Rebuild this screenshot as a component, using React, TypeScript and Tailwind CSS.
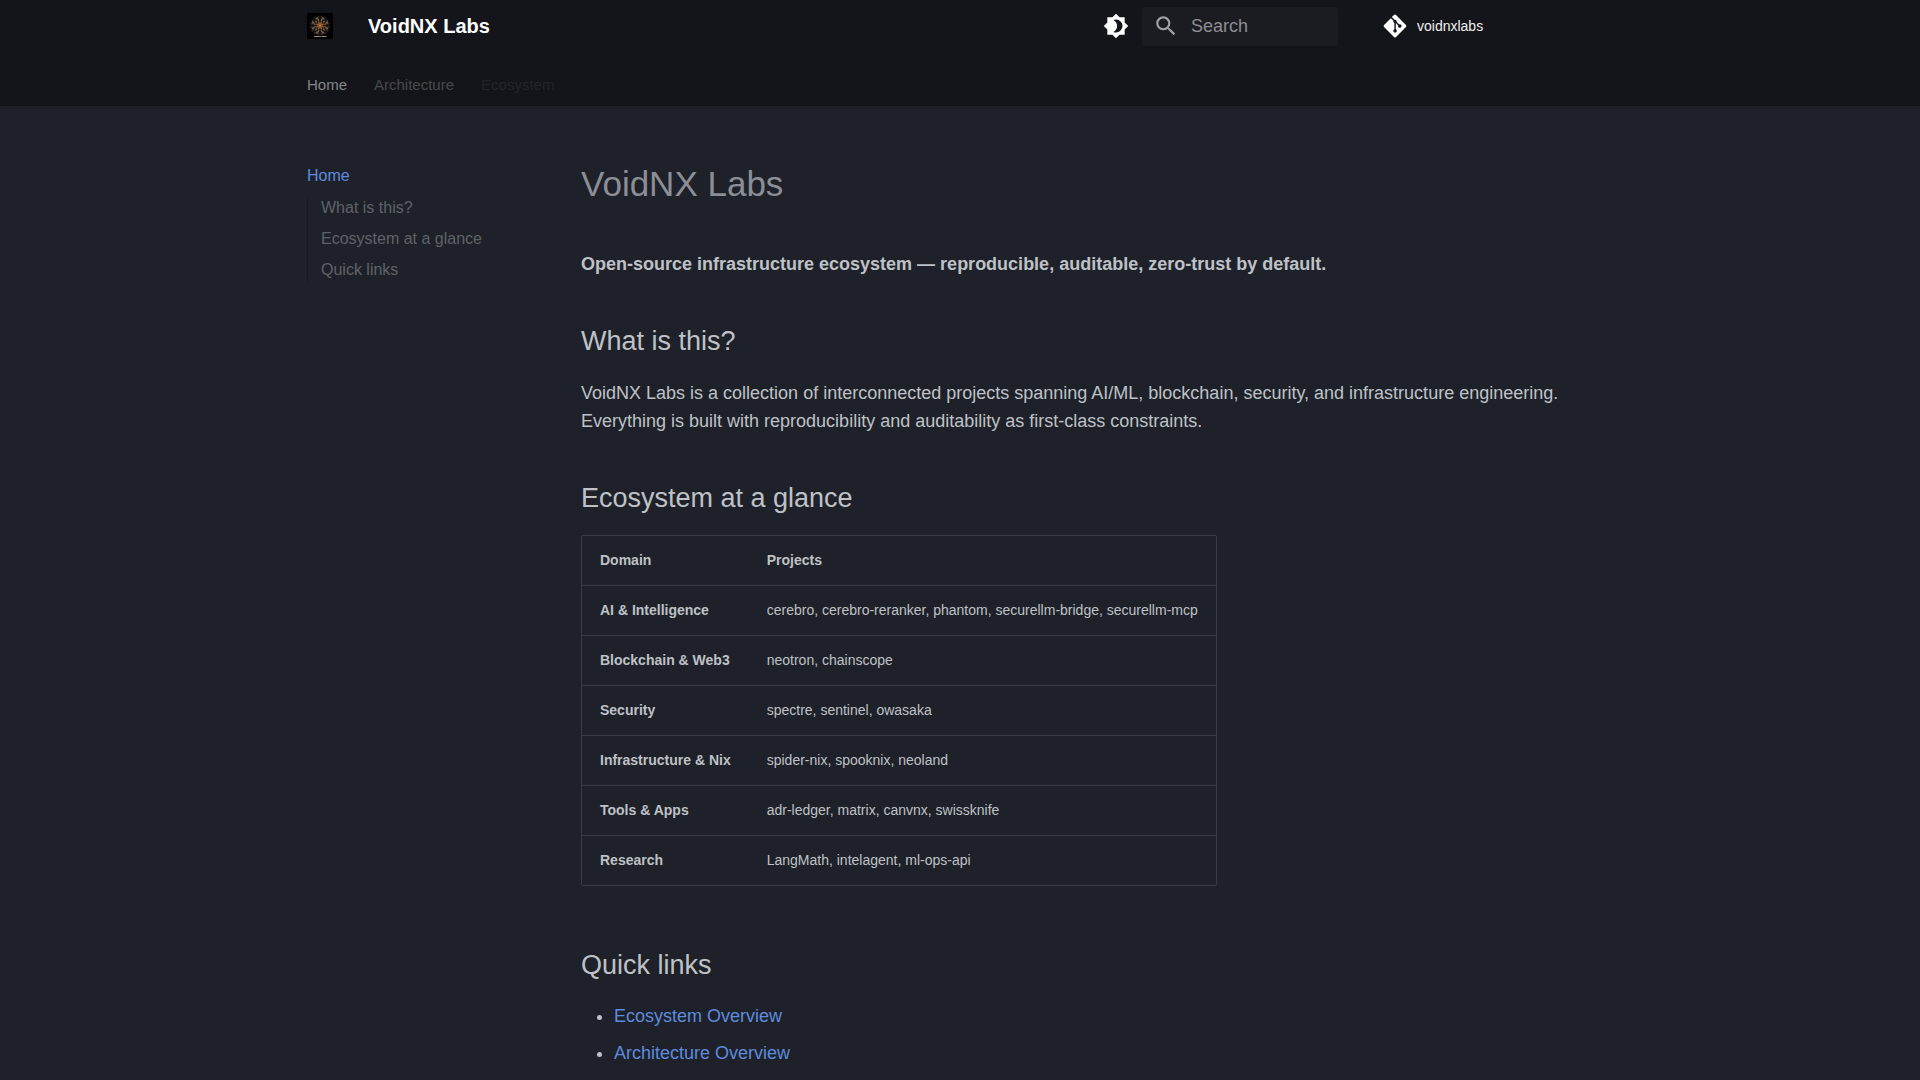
import React from "react";
import { FaGitAlt } from "react-icons/fa";

const tabs = [
  { label: "Home", className: "text-[#858689]" },
  { label: "Architecture", className: "text-[#48494d]" },
  { label: "Ecosystem", className: "text-[#232429]" },
];

const toc = [
  { label: "What is this?", href: "#what-is-this" },
  { label: "Ecosystem at a glance", href: "#ecosystem-at-a-glance" },
  { label: "Quick links", href: "#quick-links" },
];

const domains = [
  {
    domain: "AI & Intelligence",
    projects: "cerebro, cerebro-reranker, phantom, securellm-bridge, securellm-mcp",
  },
  { domain: "Blockchain & Web3", projects: "neotron, chainscope" },
  { domain: "Security", projects: "spectre, sentinel, owasaka" },
  { domain: "Infrastructure & Nix", projects: "spider-nix, spooknix, neoland" },
  { domain: "Tools & Apps", projects: "adr-ledger, matrix, canvnx, swissknife" },
  { domain: "Research", projects: "LangMath, intelagent, ml-ops-api" },
];

const quickLinks = ["Ecosystem Overview", "Architecture Overview"];

// Mandala rings: petal count, distance from the centre, petal size, colour
const rings = [
  { count: 16, radius: 18, rx: 1, ry: 3, fill: "#3a302a" },
  { count: 8, radius: 15, rx: 2.5, ry: 2.5, fill: "#66625f" },
  { count: 12, radius: 11, rx: 1.5, ry: 2.5, fill: "#75604e" },
  { count: 8, radius: 5, rx: 1.5, ry: 3.5, fill: "#a5652f" },
];

function Logo() {
  return (
    <svg viewBox="0 0 52 52" className="w-[26px] h-[26px]" aria-hidden="true">
      <rect width="52" height="52" fill="#000" />
      <circle cx="26" cy="25" r="20" fill="#2a1c12" opacity="0.6" />
      {rings.map((ring) =>
        Array.from({ length: ring.count }, (_, i) => (
          <ellipse
            key={`${ring.radius}-${i}`}
            cx="26"
            cy={25 - ring.radius}
            rx={ring.rx}
            ry={ring.ry}
            fill={ring.fill}
            transform={`rotate(${(360 / ring.count) * (i + 0.5)} 26 25)`}
          />
        ))
      )}
      <circle cx="26" cy="25" r="2" fill="#d0905a" />
      <path d="M14 47h10M29 47h10" stroke="#8d8d8d" strokeWidth="2" />
      <path d="M24 47h4" stroke="#c46a22" strokeWidth="2" />
    </svg>
  );
}

function BrightnessIcon() {
  return (
    <svg viewBox="0 0 24 24" className="w-[26px] h-[26px]" fill="currentColor" aria-hidden="true">
      <path d="M12 18c-.89 0-1.74-.2-2.5-.55C11.56 16.5 13 14.42 13 12s-1.44-4.5-3.5-5.45C10.26 6.2 11.11 6 12 6a6 6 0 0 1 6 6 6 6 0 0 1-6 6m8-9.31V4h-4.69L12 .69 8.69 4H4v4.69L.69 12 4 15.31V20h4.69L12 23.31 15.31 20H20v-4.69L23.31 12z" />
    </svg>
  );
}

function SearchIcon() {
  return (
    <svg viewBox="0 0 24 24" className="w-[26px] h-[26px]" fill="currentColor" aria-hidden="true">
      <path d="M9.5 3A6.5 6.5 0 0 1 16 9.5c0 1.61-.59 3.09-1.56 4.23l.27.27h.79l5 5-1.5 1.5-5-5v-.79l-.27-.27A6.52 6.52 0 0 1 9.5 16 6.5 6.5 0 0 1 3 9.5 6.5 6.5 0 0 1 9.5 3m0 2C7 5 5 7 5 9.5S7 14 9.5 14 14 12 14 9.5 12 5 9.5 5" />
    </svg>
  );
}

function Header() {
  return (
    <header className="bg-[#14151a]">
      <div className="max-w-[1342px] h-[52px] mx-auto px-[18px] flex items-center">
        <a href="#" title="VoidNX Labs">
          <Logo />
        </a>
        <span className="ml-[35px] flex-1 text-xl font-bold text-white">VoidNX Labs</span>
        <button type="button" title="Switch theme" className="mr-[13px] text-white">
          <BrightnessIcon />
        </button>
        <label className="flex items-center w-[196px] h-[39px] pl-[11px] mr-[44px] rounded-xs bg-[#1b1c21] text-[#a0a1a4]">
          <SearchIcon />
          <input
            type="text"
            aria-label="Search"
            placeholder="Search"
            className="ml-3 min-w-0 flex-1 bg-transparent text-lg outline-none placeholder:text-[#8c8d91]"
          />
        </label>
        <a href="#" className="flex items-center gap-[9px] w-[231px] text-sm text-[#f0f0f1]">
          <FaGitAlt className="w-[26px] h-[26px] text-white" />
          voidnxlabs
        </a>
      </div>
      <nav aria-label="Tabs" className="max-w-[1342px] h-[54px] mx-auto px-[18px] flex items-center gap-[27px] pt-[11px]">
        {tabs.map((tab) => (
          <a key={tab.label} href="#" className={`text-[15px] leading-5 ${tab.className}`}>
            {tab.label}
          </a>
        ))}
      </nav>
    </header>
  );
}

function Sidebar() {
  return (
    <nav
      aria-label="Table of contents"
      className="w-[266px] shrink-0 pl-[18px] pt-[60px] text-base leading-5"
    >
      <a href="#" className="block text-[#5e8bde]">
        Home
      </a>
      <ul className="mt-3 pl-[13px] pb-1 flex flex-col gap-[11px] border-l border-[#191b22] text-[#5e6168]">
        {toc.map((item) => (
          <li key={item.label}>
            <a href={item.href}>{item.label}</a>
          </li>
        ))}
      </ul>
    </nav>
  );
}

export default function App() {
  return (
    <div className="min-h-screen bg-[#1e2129] text-[#bfc1c6] font-['Liberation_Sans',Arial,sans-serif]">
      <Header />
      <div className="max-w-[1342px] mx-auto flex items-start">
        <Sidebar />
        <main className="min-w-0 flex-1 pl-[26px] pr-[18px] pt-[55px] text-lg leading-7">
          <h1 className="text-[35px] leading-[46px] text-[#8c8e95]">VoidNX Labs</h1>
          <p className="mt-[43px] font-bold">
            Open-source infrastructure ecosystem — reproducible, auditable, zero-trust by default.
          </p>

          <h2 id="what-is-this" className="mt-11 text-[27px] leading-[38px]">
            What is this?
          </h2>
          <p className="mt-[19px]">
            VoidNX Labs is a collection of interconnected projects spanning AI/ML, blockchain,
            security, and infrastructure engineering. Everything is built with reproducibility and
            auditability as first-class constraints.
          </p>

          <h2 id="ecosystem-at-a-glance" className="mt-11 text-[27px] leading-[38px]">
            Ecosystem at a glance
          </h2>
          <div className="mt-[18px] w-fit rounded-xs border border-[#383b43]">
            <table className="text-sm leading-5 text-left">
              <thead>
                <tr className="h-[49px]">
                  <th className="px-[18px]">Domain</th>
                  <th className="px-[18px]">Projects</th>
                </tr>
              </thead>
              <tbody>
                {domains.map((row) => (
                  <tr key={row.domain} className="h-[50px] border-t border-[#383b43]">
                    <td className="px-[18px] font-bold">{row.domain}</td>
                    <td className="px-[18px]">{row.projects}</td>
                  </tr>
                ))}
              </tbody>
            </table>
          </div>

          <h2 id="quick-links" className="mt-[60px] text-[27px] leading-[38px]">
            Quick links
          </h2>
          <ul className="mt-[18px] pl-[33px] pb-3 list-disc flex flex-col gap-[9px]">
            {quickLinks.map((link) => (
              <li key={link}>
                <a href="#" className="text-[#5e8bde]">
                  {link}
                </a>
              </li>
            ))}
          </ul>
        </main>
      </div>
    </div>
  );
}
